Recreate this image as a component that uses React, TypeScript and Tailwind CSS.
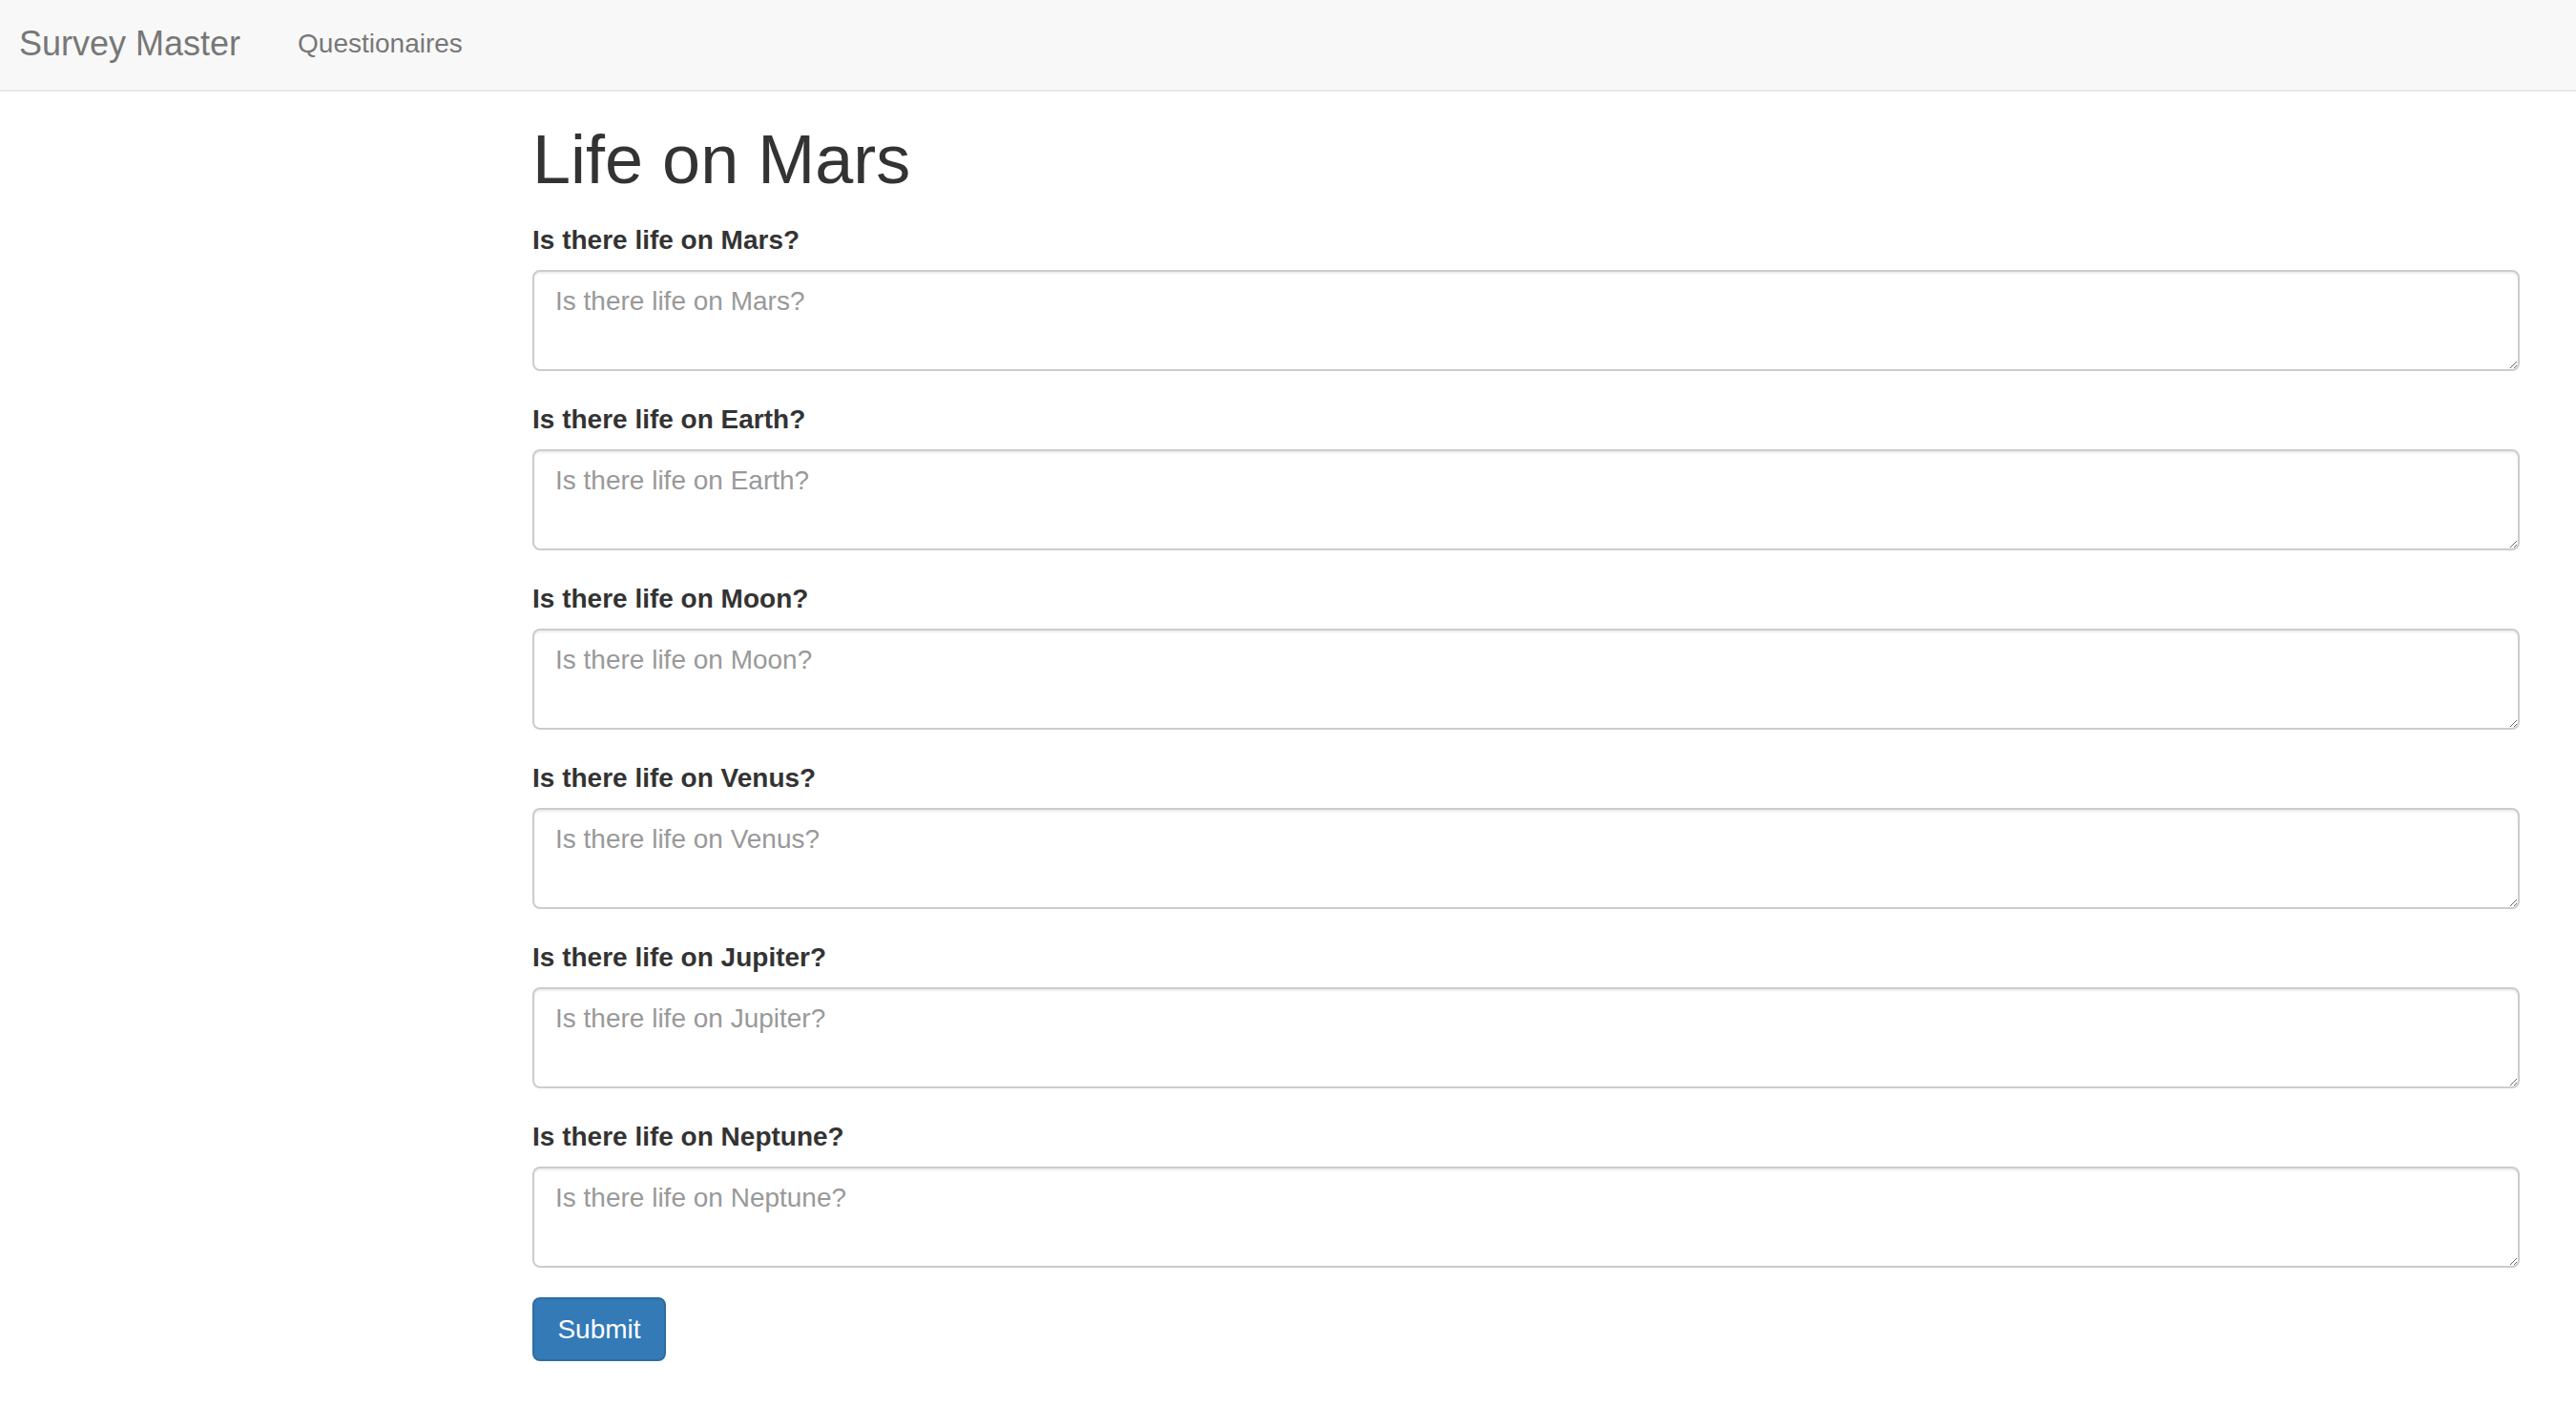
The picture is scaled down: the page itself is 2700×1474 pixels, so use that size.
import React from "react";

const questions = ["Mars", "Earth", "Moon", "Venus", "Jupiter", "Neptune"];

const Navbar = () => {
  return (
    <div className="h-[96px] bg-[#f8f8f8] border-b-2 border-[#e7e7e7] flex items-center">
      <div className="ml-[20px] text-[36px] text-[#777] leading-none pb-[2px]">
        Survey Master
      </div>
      <div className="ml-[60px] text-[28px] text-[#777] leading-none pb-[2px]">
        Questionaires
      </div>
    </div>
  );
};

const Question = ({ planet }: { planet: string }) => {
  const text = `Is there life on ${planet}?`;
  return (
    <div className="mb-[31px]">
      <label className="block font-bold text-[28px] leading-[40px] text-[#333] mb-[11px]">
        {text}
      </label>
      <textarea
        className="block w-full h-[106px] border-2 border-[#ccc] rounded-[8px] px-[22px] py-[11px] text-[28px] leading-[40px] text-[#555] placeholder:text-[#999] shadow-[inset_0_2px_2px_rgba(0,0,0,0.075)] outline-none"
        placeholder={text}
      />
    </div>
  );
};

export default function App() {
  return (
    <div className="min-h-screen bg-white font-['Liberation_Sans',Arial,sans-serif]">
      <Navbar />
      <div className="ml-[558px] mr-[59px]">
        <h1 className="mt-[32px] mb-[25px] text-[72px] leading-[1.1] text-[#333] font-normal">
          Life on Mars
        </h1>
        {questions.map((p) => (
          <Question key={p} planet={p} />
        ))}
        <button className="w-[140px] h-[67px] bg-[#337ab7] border-2 border-[#2e6da4] rounded-[8px] text-white text-[28px] leading-[40px] flex items-center justify-center">
          Submit
        </button>
      </div>
    </div>
  );
}
